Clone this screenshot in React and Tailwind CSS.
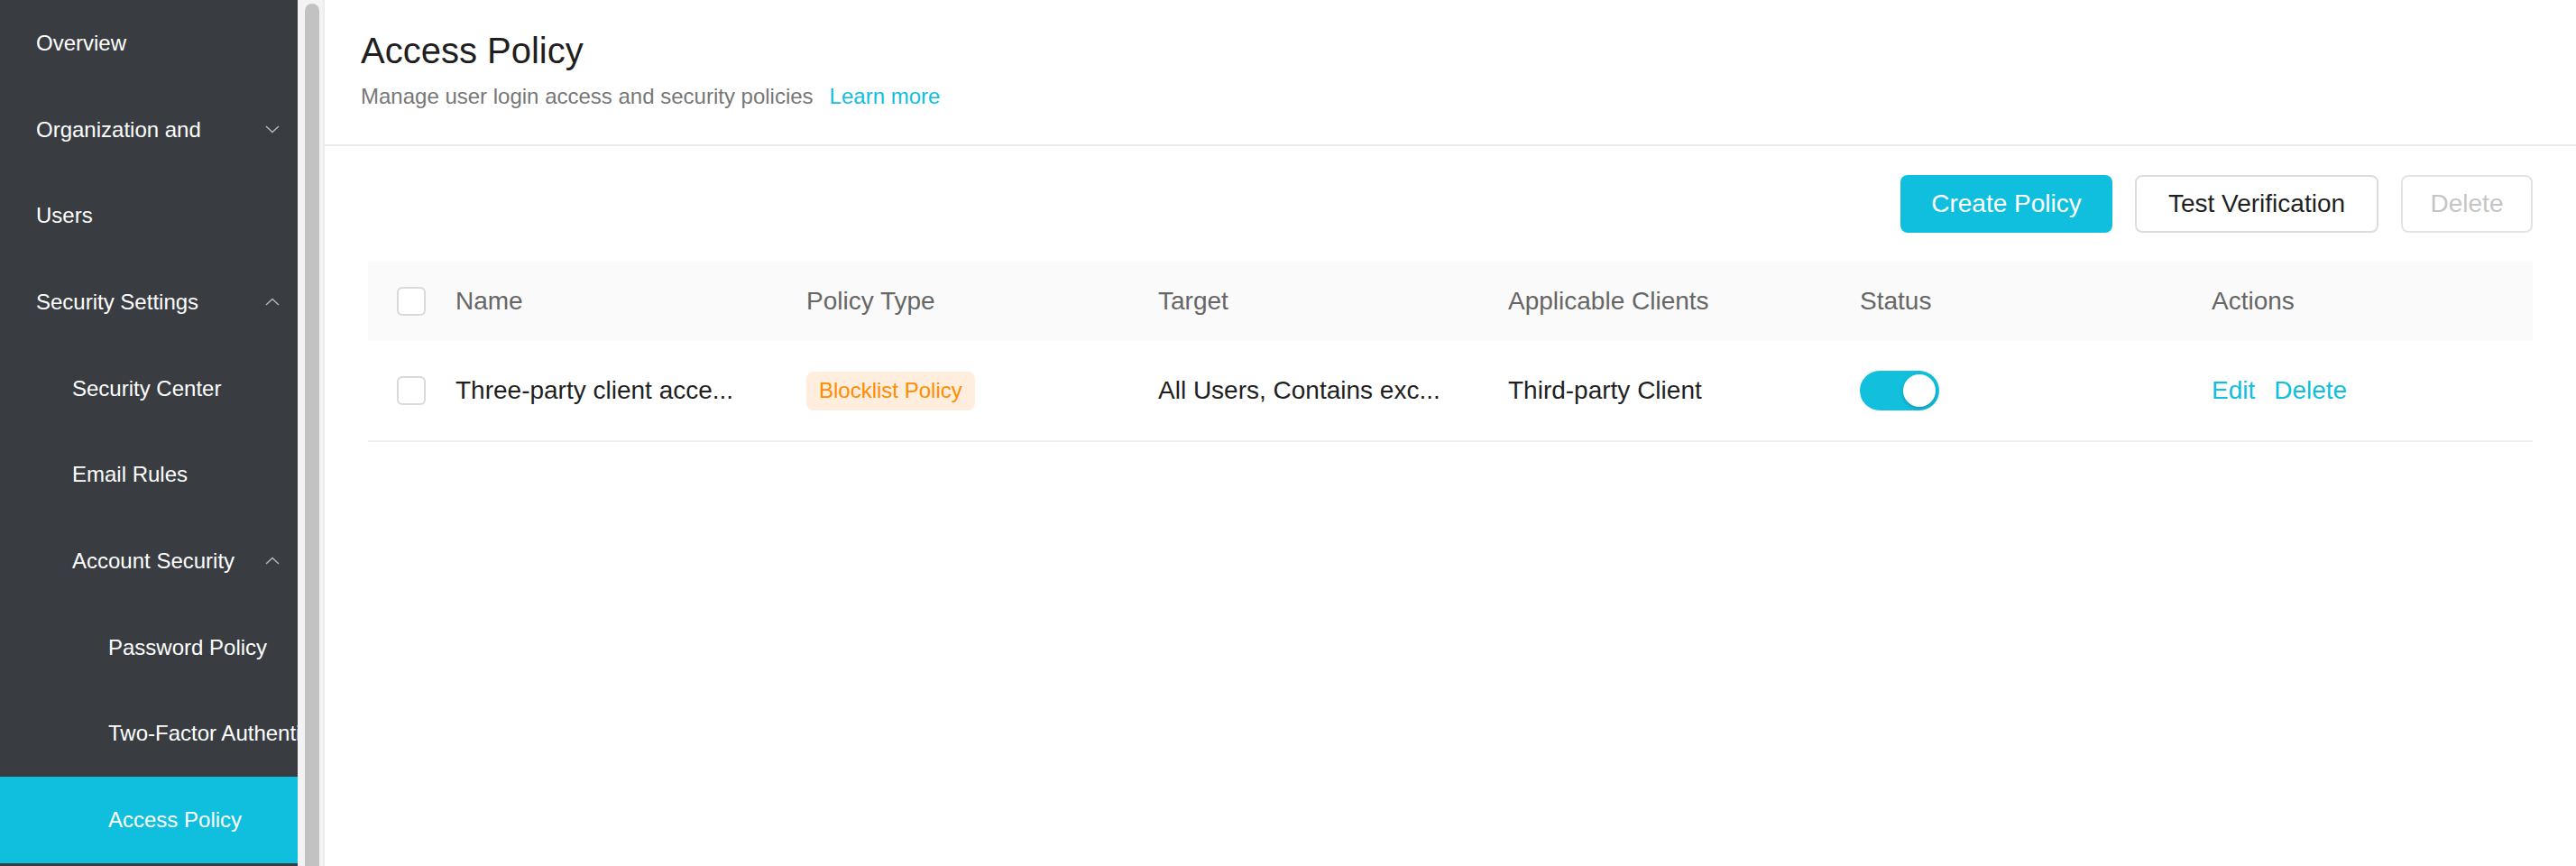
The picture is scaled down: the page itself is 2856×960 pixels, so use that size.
import React from 'react';

const navItems = [
  { label: 'Overview', level: 1 },
  { label: 'Organization and', level: 1, chevron: 'down' },
  { label: 'Users', level: 1 },
  { label: 'Security Settings', level: 1, chevron: 'up' },
  { label: 'Security Center', level: 2 },
  { label: 'Email Rules', level: 2 },
  { label: 'Account Security', level: 2, chevron: 'up' },
  { label: 'Password Policy', level: 3 },
  { label: 'Two-Factor Authentication', level: 3 },
  { label: 'Access Policy', level: 3, active: true },
];

const indent = {
  1: 'pl-[40px]',
  2: 'pl-[80px]',
  3: 'pl-[120px]',
};

const Chevron = ({ dir }) => (
  <svg width="16" height="9" viewBox="0 0 16 9" fill="none" className="shrink-0">
    <path
      d={dir === 'up' ? 'M1 8L8 1.5L15 8' : 'M1 1L8 7.5L15 1'}
      stroke="#b4b6b8"
      strokeWidth="1.5"
    />
  </svg>
);

const Checkbox = () => (
  <div className="w-[32px] h-[32px] rounded-[6px] border-2 border-[#d9d9d9] bg-white" />
);

const Sidebar = () => (
  <aside className="w-[330px] shrink-0 bg-[#393d42] overflow-hidden">
    {navItems.map((item) => (
      <div
        key={item.label}
        className={`h-[95.7px] flex items-center justify-between pr-[20px] ${indent[item.level]} ${
          item.active ? 'bg-[#0fbfdd]' : ''
        }`}
      >
        <span className="text-[24px] text-white whitespace-nowrap">{item.label}</span>
        {item.chevron && <Chevron dir={item.chevron} />}
      </div>
    ))}
  </aside>
);

const columns = ['Name', 'Policy Type', 'Target', 'Applicable Clients', 'Status', 'Actions'];

const gridCols = 'grid grid-cols-[81px_389px_390px_388px_390px_390px_1fr] items-center';

const App = () => {
  return (
    <div className="flex h-[960px] w-full overflow-hidden bg-white font-['Liberation_Sans',Arial,sans-serif]">
      <Sidebar />

      {/* fake scrollbar of the nav */}
      <div className="w-[28px] shrink-0 bg-[#f3f3f3] pt-[4px] pl-[8px] pr-[4px]">
        <div className="h-full rounded-t-full bg-[#c2c2c2]" />
      </div>

      <main className="flex-1 min-w-0 border-l-2 border-[#ececec]">
        {/* Page header */}
        <div className="px-[40px] pt-[32px] pb-[37px] border-b-2 border-[#ebebeb]">
          <h1 className="text-[40px] leading-[48px] text-[#1f1f1f]">Access Policy</h1>
          <p className="mt-[11px] text-[24px] leading-[32px] text-[#777]">
            Manage user login access and security policies
            <a className="ml-[18px] text-[#12bedd]">Learn more</a>
          </p>
        </div>

        <div className="px-[48px] pt-[32px]">
          {/* Toolbar */}
          <div className="flex justify-end gap-[25px]">
            <button className="w-[235px] h-[64px] rounded-[8px] bg-[#0fbfdd] text-white text-[28px] flex items-center justify-center">
              Create Policy
            </button>
            <button className="w-[270px] h-[64px] rounded-[8px] border-2 border-[#dcdcdc] bg-white text-[#1f1f1f] text-[28px] flex items-center justify-center">
              Test Verification
            </button>
            <button className="w-[146px] h-[64px] rounded-[8px] border-2 border-[#e4e4e4] bg-white text-[#c5c5c5] text-[28px] flex items-center justify-center">
              Delete
            </button>
          </div>

          {/* Table */}
          <div className="mt-[32px]">
            <div className={`${gridCols} h-[88px] bg-[#fafafa] text-[28px] text-[#666]`}>
              <div className="pl-[32px]">
                <Checkbox />
              </div>
              {columns.map((c) => (
                <div key={c} className="pl-[16px] whitespace-nowrap">
                  {c}
                </div>
              ))}
            </div>

            <div className={`${gridCols} h-[112px] border-b-2 border-[#efefef] text-[28px] text-[#1f1f1f]`}>
              <div className="pl-[32px]">
                <Checkbox />
              </div>
              <div className="pl-[16px] whitespace-nowrap">Three-party client acce...</div>
              <div className="pl-[16px]">
                <span className="inline-flex items-center h-[43px] px-[14px] rounded-[8px] bg-[#ffeedd] text-[#ff8c00] text-[24px] whitespace-nowrap">
                  Blocklist Policy
                </span>
              </div>
              <div className="pl-[16px] whitespace-nowrap">All Users, Contains exc...</div>
              <div className="pl-[16px] whitespace-nowrap">Third-party Client</div>
              <div className="pl-[16px]">
                <div className="w-[88px] h-[44px] rounded-full bg-[#12bfdd] flex items-center justify-end pr-[4px]">
                  <div className="w-[36px] h-[36px] rounded-full bg-white shadow-[0_2px_4px_rgba(0,0,0,0.2)]" />
                </div>
              </div>
              <div className="pl-[16px] flex gap-[21px] text-[#12bedd] whitespace-nowrap">
                <span>Edit</span>
                <span>Delete</span>
              </div>
            </div>
          </div>
        </div>
      </main>
    </div>
  );
};

export default App;
